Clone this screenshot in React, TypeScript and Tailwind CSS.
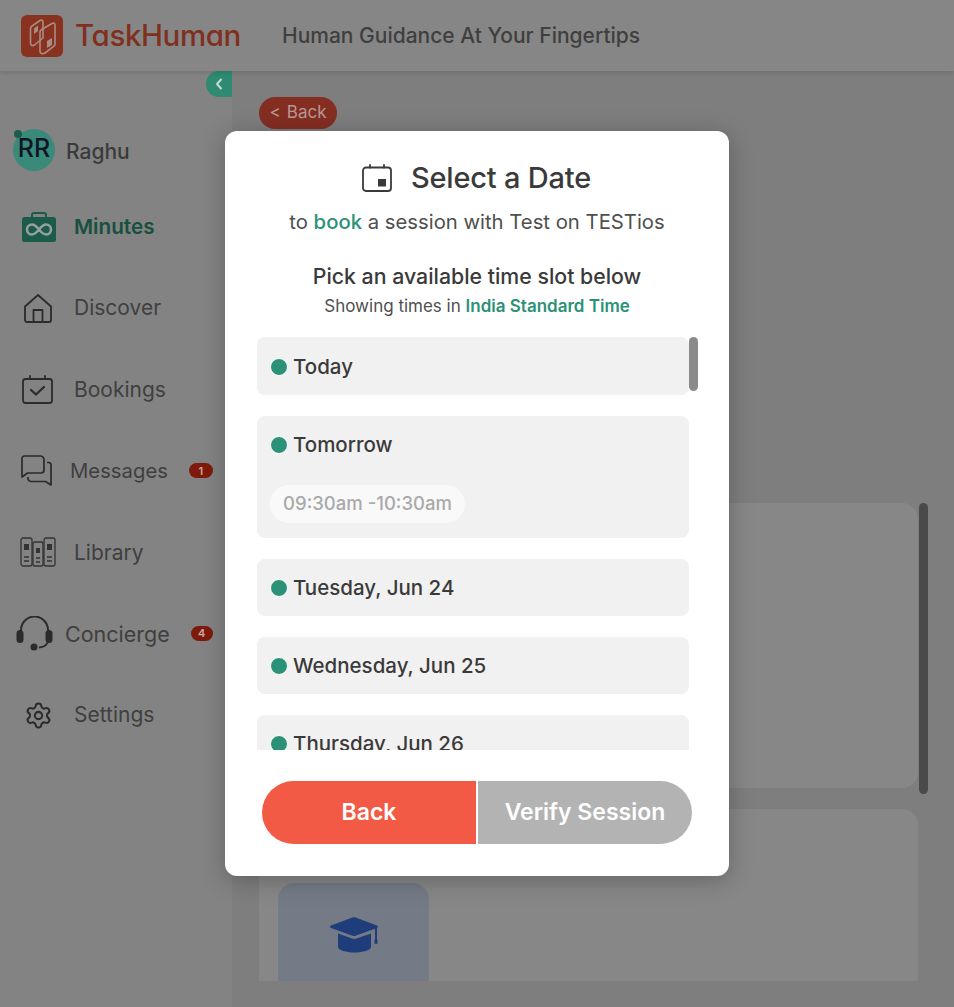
import { Settings } from "lucide-react";
import type { ReactNode } from "react";

const font = { fontFamily: "Inter, 'Noto Sans', sans-serif" };

function LogoMark() {
  return (
    <svg width="42" height="42" viewBox="0 0 42 42" fill="none">
      <rect width="42" height="42" rx="6" fill="#8a3220" />
      <g stroke="#a98c84" strokeWidth="1.600" strokeLinejoin="round">
        <path d="M9.500 13.500c0-1 .5-1.800 1.300-2.300L19 5.500c1.500-.8 3-.2 3 1.500v16l-8.500 7c-2 1.200-4 .5-4-1.500z" />
        <path d="M19 17c0-1 .5-1.800 1.300-2.300L31 8.500c1.500-.8 3-.2 3 1.500v19c0 1-.5 1.800-1.300 2.300L24 38c-2.500 1.300-5 .5-5-1.500z" />
      </g>
      <path d="M13 13.500 17 10.500V16l-4 3z" fill="#a98c84" />
      <path d="M26 26 31 23v7l-5 3z" fill="#a98c84" />
    </svg>
  );
}

function MinutesIcon() {
  return (
    <svg width="34" height="30" viewBox="0 0 34 30" fill="none">
      <path d="M10 6V3a2 2 0 0 1 2-2h10a2 2 0 0 1 2 2v3" stroke="#1c5a49" strokeWidth="2" />
      <rect y="5" width="34" height="25" rx="2.500" fill="#1c5a49" />
      <path
        d="M17 17.500c-2.500-3-4.500-5-7-5a5 5 0 0 0 0 10c2.500 0 4.500-2 7-5s4.500-5 7-5a5 5 0 0 1 0 10c-2.500 0-4.500-2-7-5z"
        stroke="#93a09c"
        strokeWidth="2.600"
      />
    </svg>
  );
}

function HomeIcon() {
  return (
    <svg width="28" height="29" viewBox="0 0 28 29" fill="none" stroke="#2b2b2b" strokeWidth="1.800" strokeLinejoin="round">
      <path d="M1 12.500 14 1l13 11.500V26a2 2 0 0 1-2 2H3a2 2 0 0 1-2-2z" />
      <path d="M9.500 28V16h9v12" />
    </svg>
  );
}

function BookingIcon() {
  return (
    <svg width="31" height="29" viewBox="0 0 31 29" fill="none" stroke="#2b2b2b" strokeWidth="1.800" strokeLinecap="round" strokeLinejoin="round">
      <rect x="1" y="4" width="29" height="24" rx="2.500" />
      <path d="M8 1v3M23 1v3" />
      <path d="m9 15 5 4.500 8-7.500" strokeWidth="2.200" />
    </svg>
  );
}

function MessagesIcon() {
  return (
    <svg width="31" height="31" viewBox="0 0 31 31" fill="none" stroke="#2b2b2b" strokeWidth="1.700" strokeLinejoin="round">
      <path d="M1 3.500A2.500 2.500 0 0 1 3.500 1h16A3.500 3.500 0 0 1 23 4.500V15a3 3 0 0 1-3 3H6.500L1 22z" />
      <path d="M26 7.500h1.500A2.500 2.500 0 0 1 30 10v20l-5.500-3.500H9.500A3 3 0 0 1 7 24v-2" />
    </svg>
  );
}

function LibraryIcon() {
  return (
    <svg width="36" height="30" viewBox="0 0 36 30" fill="none" stroke="#333" strokeWidth="1.300">
      <rect x="1" y="1" width="11" height="28" rx="2" />
      <rect x="13" y="5" width="10" height="24" rx="2" />
      <rect x="24" y="1" width="11" height="28" rx="2" />
      <path d="M4 7h5v6H4zM16 11h4v5h-4zM27 7h5v6h-5z" fill="#333" stroke="none" />
      <path d="M4 20h5M4 24h5M16 21h4M16 25h4M27 20h5M27 24h5" />
    </svg>
  );
}

function HeadsetIcon() {
  return (
    <svg width="37" height="36" viewBox="0 0 37 36" fill="none">
      <path d="M5 16v-2a13.500 13.500 0 0 1 27 0v2" stroke="#2b2b2b" strokeWidth="2" />
      <path d="M32 24c0 5-4 7-9 7.500" stroke="#2b2b2b" strokeWidth="1.800" />
      <rect x="0.500" y="14" width="7" height="13" rx="3.500" fill="#2b2b2b" />
      <rect x="29.500" y="14" width="7" height="13" rx="3.500" fill="#2b2b2b" />
      <circle cx="18" cy="31" r="3.500" fill="#2b2b2b" />
    </svg>
  );
}

function CalendarIcon() {
  return (
    <svg width="30" height="28" viewBox="0 0 30 28" fill="none" stroke="#3a3a3a" strokeWidth="1.800" strokeLinecap="round">
      <rect x="1" y="3.500" width="28" height="23.500" rx="3" />
      <path d="M8 1v2.500M22 1v2.500" />
      <rect x="16" y="15" width="8" height="7.500" fill="#3a3a3a" stroke="none" />
    </svg>
  );
}

function CapIcon() {
  return (
    <svg width="50" height="36" viewBox="0 0 50 36" fill="#1f3d7a">
      <path d="M1 8.500 22.500.6c1-.4 2-.4 3 0L47 8.500c1.300.5 1.300 2 0 2.500L25.500 18.800c-1 .4-2 .4-3 0L1 11c-1.300-.5-1.300-2 0-2.500z" />
      <path d="M8 16.500 22 21.500c1.500.5 3 .5 4.500 0L41 16.500V30c0 3-8 5.500-16.500 5.500S8 33 8 30z" />
      <rect x="45" y="10" width="2" height="14" />
      <rect x="44.500" y="22" width="3" height="5" rx="1.500" />
    </svg>
  );
}

type NavItem = { label: string; icon: ReactNode; rowClass: string; iconClass: string; textClass: string; active?: boolean; badge?: string; badgeClass?: string };

const navItems: NavItem[] = [
  { label: "Minutes", icon: <MinutesIcon />, rowClass: "pl-[22px]", iconClass: "w-[52px]", textClass: "text-[20.700px]", active: true },
  { label: "Discover", icon: <HomeIcon />, rowClass: "pl-[24px]", iconClass: "w-[50px]", textClass: "text-[21px]" },
  { label: "Bookings", icon: <BookingIcon />, rowClass: "pl-[22px]", iconClass: "w-[52px]", textClass: "text-[21px]" },
  { label: "Messages", icon: <MessagesIcon />, rowClass: "pl-[21px]", iconClass: "w-[49px]", textClass: "text-[20.300px]", badge: "1", badgeClass: "ml-[21px] w-[24px]" },
  { label: "Library", icon: <LibraryIcon />, rowClass: "pl-[20px]", iconClass: "w-[54px]", textClass: "text-[21px]" },
  { label: "Concierge", icon: <HeadsetIcon />, rowClass: "pl-[16px]", iconClass: "w-[49px]", textClass: "text-[21.500px]", badge: "4", badgeClass: "ml-[21px] w-[22px]" },
  { label: "Settings", icon: <Settings size={29} strokeWidth={1.700} color="#2b2b2b" />, rowClass: "pl-[24px]", iconClass: "w-[50px]", textClass: "text-[21px]" },
];

const days = ["Today", "Tomorrow", "Tuesday, Jun 24", "Wednesday, Jun 25", "Thursday, Jun 26"];

function DayCard({ label }: { label: string }) {
  return (
    <div className={`w-[432px] shrink-0 rounded-lg bg-[#f1f1f1] pr-[14px] pl-[13px] ${label === "Today" ? "pt-[17px] pb-[16px]" : label === "Tomorrow" ? "pt-[16px] pb-[15px]" : "pt-[16px] pb-[16px]"}`}>
      <div className="flex h-[25px] items-center gap-[5px]">
        <span className="h-[18px] w-[18px] rounded-full border border-white bg-[#2c9277]" />
        <span className="text-[20.500px] leading-[25px] font-medium text-[#3a3a3a]">{label}</span>
      </div>
      {label === "Tomorrow" && (
        <div className="mt-[28px] flex h-[38px] w-[195px] items-center justify-center rounded-full bg-[#f9f9f9] text-[18.500px] font-medium text-[#a9a9a9]">
          09:30am -10:30am
        </div>
      )}
    </div>
  );
}

export default function App() {
  return (
    <div style={font} className="relative flex h-[1007px] w-[954px] flex-col overflow-hidden bg-[#7e7e7e]">
      <header className="z-10 flex h-[71px] shrink-0 items-center bg-[#868686] pl-[21px] shadow-[0_2px_4px_rgba(0,0,0,0.12)]">
        <LogoMark />
        <span className="ml-[12px] w-[165px] text-[29.500px] font-medium tracking-[-0.4px] whitespace-nowrap text-[#80301f] [font-feature-settings:'cv11']">TaskHuman</span>
        <span className="ml-[42px] text-[21px] font-medium text-[#3f3f3f]">Human Guidance At Your Fingertips</span>
      </header>

      <div className="flex min-h-0 flex-1">
        <aside className="relative w-[232px] shrink-0 bg-[#838383]">
          <div className="absolute top-0 right-0 flex h-[26px] w-[26px] items-center justify-center rounded-l-full bg-[#2e8a70]">
            <svg width="8" height="12" viewBox="0 0 8 12" fill="none" stroke="#c8d8d2" strokeWidth="2" strokeLinecap="round" strokeLinejoin="round">
              <path d="M6 1.500 2 6l4 4.500" />
            </svg>
          </div>
          <div className="flex h-[100px] items-end pl-[13px]">
            <div className="relative flex h-[42px] w-[42px] items-center justify-center rounded-full bg-[#3a8a7a] pb-[3px] text-[25px] leading-none font-medium text-[#0e1626]">
              RR
              <span className="absolute top-px left-px h-[8px] w-[8px] rounded-full bg-[#1d5c4b]" />
            </div>
            <span className="mb-[4px] ml-[11px] text-[21px] font-medium text-[#3a3a3a]">Raghu</span>
          </div>
          <nav className="mt-[15px] flex flex-col">
            {navItems.map((item) => (
              <div key={item.label} className={`flex h-[81.400px] items-center ${item.rowClass}`}>
                <span className={`flex shrink-0 items-center ${item.iconClass}`}>{item.icon}</span>
                <span className={`${item.textClass} ${item.active ? "font-semibold text-[#18503f]" : "text-[#3f3f3f]"}`}>{item.label}</span>
                {item.badge && (
                  <span className={`flex h-[15px] items-center justify-center rounded-full bg-[#7e1a0c] text-[11px] font-semibold text-[#c9a8a2] ${item.badgeClass}`}>
                    {item.badge}
                  </span>
                )}
              </div>
            ))}
          </nav>
        </aside>

        <main className="min-w-0 flex-1 pt-[26px] pl-[27px]">
          <div className="flex h-[32px] w-[78px] items-center justify-center gap-[6px] rounded-full bg-[#842e22] text-[17px] text-[#b79a95]">
            <span>&lt;</span>
            <span>Back</span>
          </div>
          <div className="relative mt-[374px] h-[478px] w-[669px] overflow-hidden">
            <div className="flex flex-col gap-[21px]">
              <div className="h-[285px] w-[659px] rounded-2xl bg-[#878787]" />
              <div className="h-[300px] w-[659px] rounded-2xl bg-[#878787] pt-[74px] pl-[19px]">
                <div className="flex h-[150px] w-[151px] items-start justify-center rounded-2xl bg-[#747b86] pt-[34px] pl-[3px]">
                  <CapIcon />
                </div>
              </div>
            </div>
            <div className="absolute top-0 right-0 h-[291px] w-[9px] rounded-full bg-[#4a4a4a]" />
          </div>
        </main>
      </div>

      {/* date picker modal */}
      <div className="absolute top-[131px] left-[225px] flex h-[745px] w-[504px] flex-col rounded-xl bg-white shadow-[0_4px_24px_rgba(0,0,0,0.25)]">
        <div className="mt-[31px] flex h-[32px] items-center justify-center gap-[19px] pr-[1px]">
          <CalendarIcon />
          <h1 className="text-[29px] font-medium tracking-[-0.2px] text-[#3a3a3a]">Select a Date</h1>
        </div>
        <p className="mt-[15px] text-center text-[20.300px] leading-[26px] text-[#4f4f4f]">
          to <span className="font-medium text-[#2c9277]">book</span> a session with Test on TESTios
        </p>
        <p className="mt-[28px] text-center text-[21.300px] leading-[26px] font-medium text-[#3a3a3a]">Pick an available time slot below</p>
        <p className="mt-[6px] text-center text-[17px] leading-[22px] text-[#4f4f4f]">
          Showing times in <span className="font-semibold text-[#2c9277]">India Standard Time</span>
        </p>

        <div className="relative mt-[20px] ml-[32px] h-[413px] w-[441px] overflow-hidden">
          <div className="flex flex-col gap-[21px]">
            {days.map((d) => (
              <DayCard key={d} label={d} />
            ))}
          </div>
          <div className="absolute top-0 right-0 h-[54px] w-[9px] rounded-full bg-[#8a8a8a]" />
        </div>

        <div className="mt-[31px] ml-[37px] flex h-[63px] w-[430px] gap-[2px] text-[23px] font-semibold text-white">
          <button className="flex-1 rounded-l-full bg-[#f35a45]">Back</button>
          <button className="flex-1 rounded-r-full bg-[#b3b3b3]">Verify Session</button>
        </div>
      </div>
    </div>
  );
}
